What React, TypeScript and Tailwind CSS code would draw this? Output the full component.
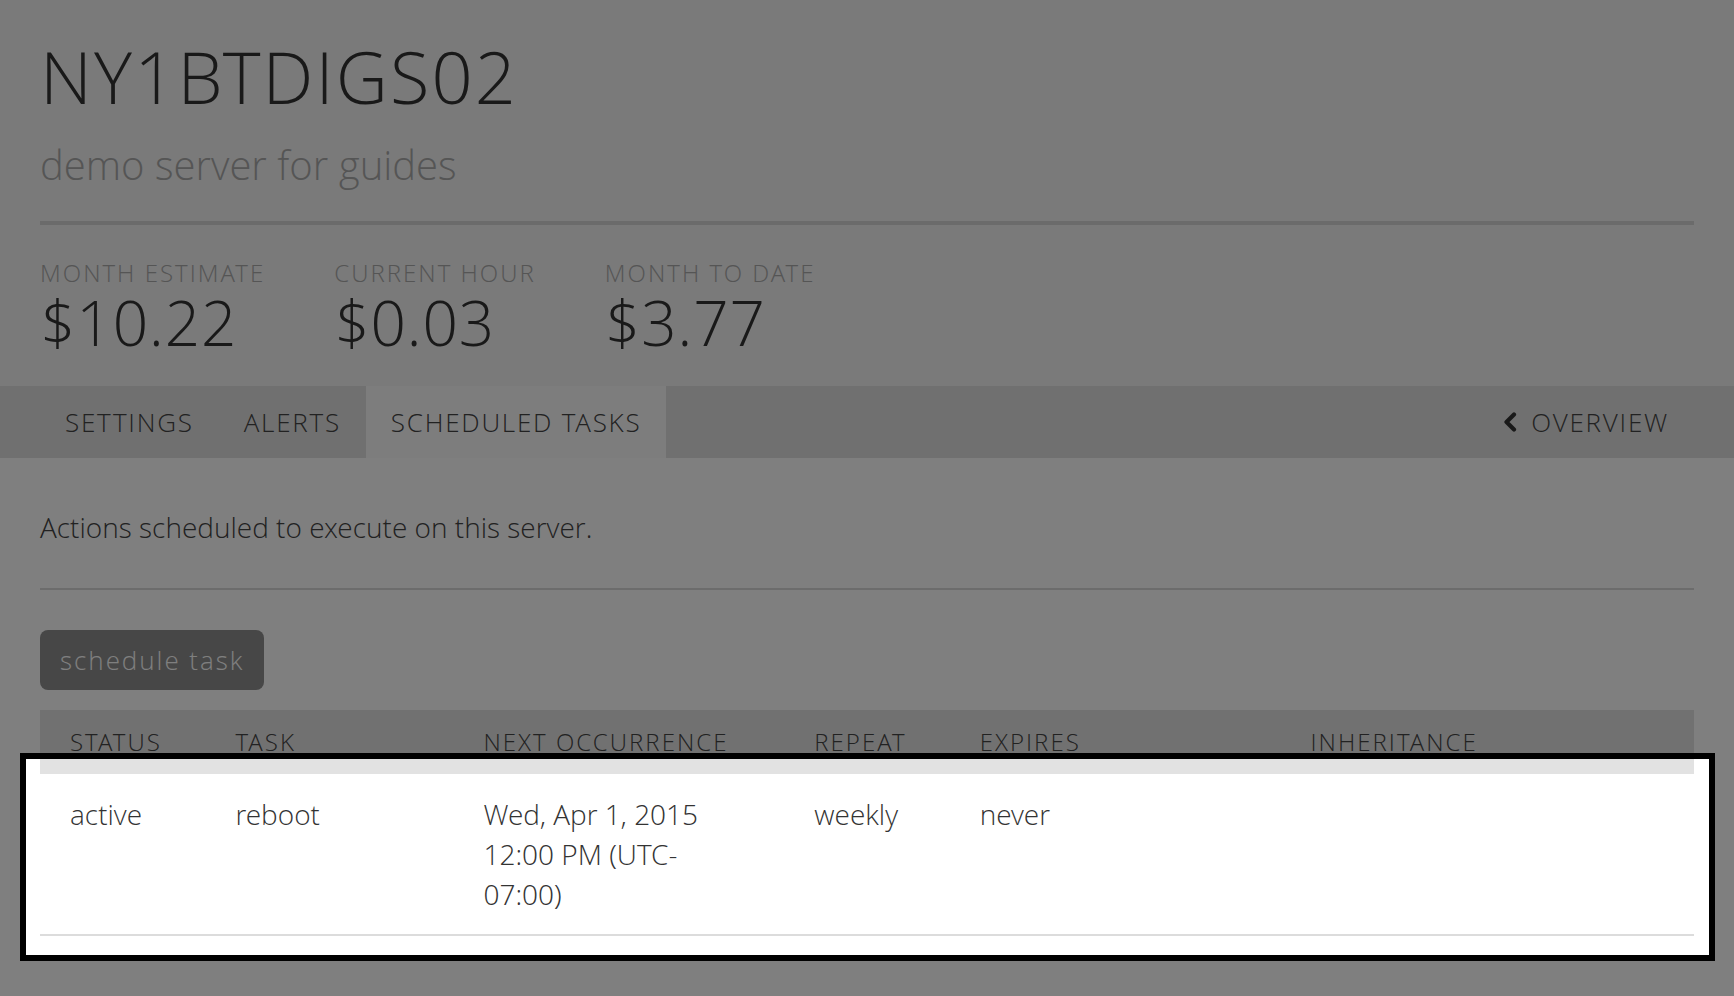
const STATS = [
  { label: "MONTH ESTIMATE", value: "$10.22" },
  { label: "CURRENT HOUR", value: "$0.03" },
  { label: "MONTH TO DATE", value: "$3.77" },
];

const TABS = ["SETTINGS", "ALERTS", "SCHEDULED TASKS"];

const COLUMNS = ["STATUS", "TASK", "NEXT OCCURRENCE", "REPEAT", "EXPIRES", "INHERITANCE"];

const GRID = "grid grid-cols-[10%_15%_20%_10%_20%_25%]";

export default function App() {
  const active = "SCHEDULED TASKS";

  return (
    <div className="min-h-screen bg-white font-['Open_Sans_Light','Open_Sans',sans-serif] font-light text-[#333]">
      <header className="bg-[#f4f4f4] px-10 pt-[40px] pb-[33px]">
        <h1 className="text-[72px] leading-none tracking-[0.03em] text-[#333]">NY1BTDIGS02</h1>
        <p className="mt-[33px] text-[40px] leading-none text-[#aaa]">demo server for guides</p>
        <div className="mt-[36px] h-[4px] bg-[#d6d6d6]" />
        <div className="mt-[36px] flex gap-[69px]">
          {STATS.map(s => (
            <div key={s.label}>
              <div className="text-[24px] leading-none tracking-[0.085em] text-[#aaa]">{s.label}</div>
              <div className="mt-[6px] text-[62px] leading-none tracking-[0.015em] text-[#333]">{s.value}</div>
            </div>
          ))}
        </div>
      </header>

      <nav className="flex h-[72px] justify-between bg-[#e0e0e0] px-10 text-[26px] tracking-[0.068em] text-[#444]">
        <div className="flex">
          {TABS.map(t => (
            <div key={t} className={"flex items-center px-[25px] " + (t === active ? "bg-[#fbfbfb]" : "")}>
              {t}
            </div>
          ))}
        </div>
        <div className="flex items-center gap-[12px] px-[25px]">
          <svg width="18" height="20" viewBox="0 0 18 20" className="text-[#333]">
            <path d="M13 2.5 L5.5 10 L13 17.5" fill="none" stroke="currentColor" strokeWidth="4.2" strokeLinecap="round" strokeLinejoin="round" />
          </svg>
          <span>OVERVIEW</span>
        </div>
      </nav>

      <main className="px-10">
        <p className="mt-[55px] text-[28px] leading-none text-[#444]">Actions scheduled to execute on this server.</p>
        <div className="mt-[47px] h-[2px] bg-[#d8d8d8]" />

        <button className="mt-[40px] h-[60px] rounded-[8px] bg-[#8e8e8e] px-5 text-[26px] tracking-[0.075em] text-white">
          schedule task
        </button>

        <div className="mt-[20px]">
          <div className={GRID + " h-[64px] items-center bg-[#e2e2e2] text-[24px] tracking-[0.085em] text-[#444]"}>
            {COLUMNS.map(c => (
              <div key={c} className="pl-[30px]">{c}</div>
            ))}
          </div>

          <div className="relative">
            <div className={GRID + " border-b-2 border-[#dcdcdc] py-[20px] text-[28px] leading-[40px] text-[#333]"}>
              <div className="pl-[30px]">active</div>
              <div className="pl-[30px]">reboot</div>
              <div className="pl-[30px]">
                Wed, Apr 1, 2015
                <br />
                12:00 PM (UTC-
                <br />
                07:00)
              </div>
              <div className="pl-[30px]">weekly</div>
              <div className="pl-[30px]">never</div>
              <div className="pl-[30px]" />
            </div>
            <div className="pointer-events-none absolute -top-[21px] -right-[21px] -bottom-[25px] -left-[20px] z-10 border-[6px] border-black shadow-[0_0_0_4000px_rgba(0,0,0,0.5)]" />
          </div>
        </div>
      </main>
    </div>
  );
}
